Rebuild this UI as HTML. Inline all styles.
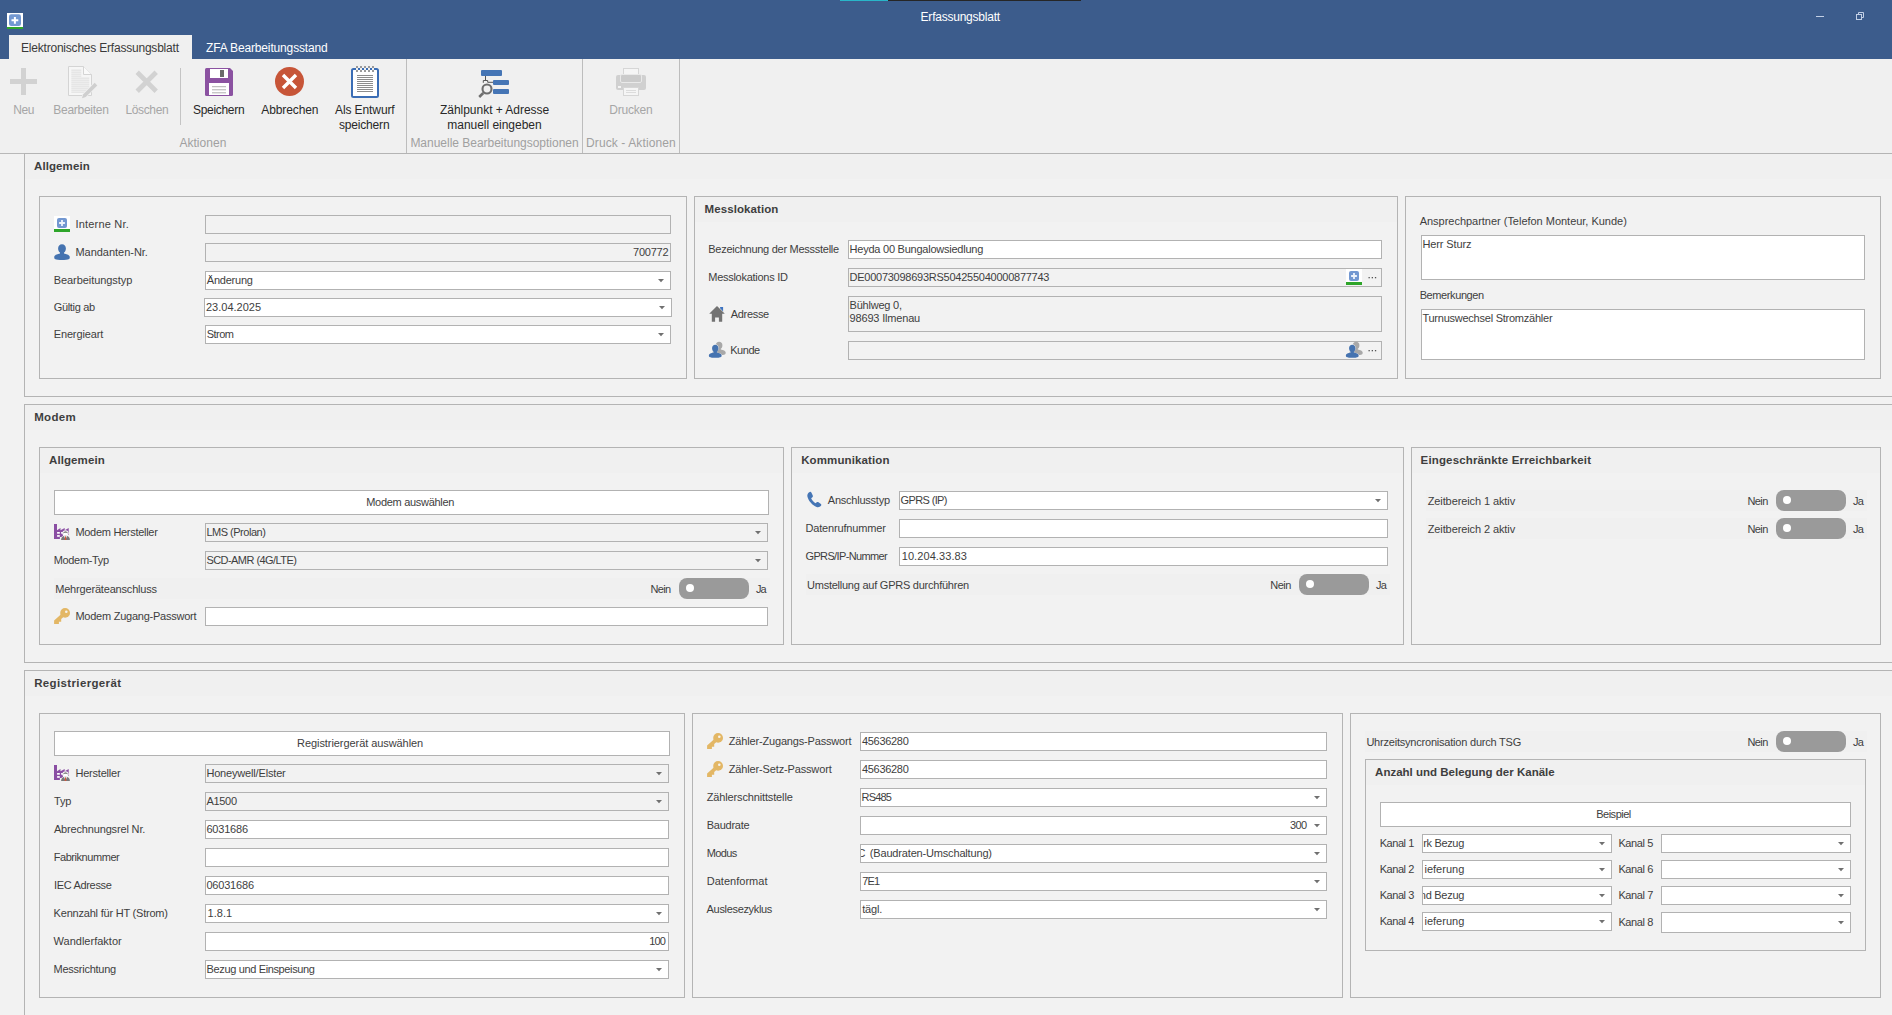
<!DOCTYPE html>
<html lang="de"><head><meta charset="utf-8"><title>Erfassungsblatt</title>
<style>
html,body{margin:0;padding:0}
body{width:1892px;height:1015px;overflow:hidden;position:relative;background:#f0f0f0;font-family:'Liberation Sans',sans-serif}
.b{position:absolute;box-sizing:border-box}
.t{position:absolute;white-space:pre}
svg{display:block;overflow:visible}
</style></head>
<body>
<div class="b" style="left:0px;top:0px;width:1892px;height:59px;background:#3c5c8c;"></div>
<div class="b" style="left:840px;top:0px;width:48px;height:1px;background:#29b6c9;"></div>
<div class="b" style="left:888px;top:0px;width:193px;height:1px;background:#262626;"></div>
<div class="b" style="left:9px;top:35px;width:183px;height:24px;background:#f0f0f0;"></div>
<div class="b" style="left:0px;top:59px;width:1892px;height:94px;background:#f0f0f0;"></div>
<div class="b" style="left:0px;top:153px;width:1892px;height:1px;background:#b8b8b8;"></div>
<div class="b" style="left:0px;top:154px;width:1892px;height:861px;background:#f2f2f2;"></div>
<div class="b" style="left:406px;top:59px;width:1px;height:94px;background:#bdbdbd;"></div>
<div class="b" style="left:582px;top:59px;width:1px;height:94px;background:#bdbdbd;"></div>
<div class="b" style="left:679px;top:59px;width:1px;height:94px;background:#bdbdbd;"></div>
<div class="b" style="left:180px;top:68px;width:1px;height:57px;background:#c4c4c4;"></div>
<div class="b" style="left:24px;top:153px;width:1873px;height:244px;border:1px solid #b4b4b4;background:#f2f2f2"></div>
<div class="b" style="left:25px;top:154px;width:1871px;height:25px;background:#f0f0f0"></div>
<div class="b" style="left:24px;top:404px;width:1873px;height:259px;border:1px solid #b4b4b4;background:#f2f2f2"></div>
<div class="b" style="left:25px;top:405px;width:1871px;height:25px;background:#f0f0f0"></div>
<div class="b" style="left:24px;top:670px;width:1873px;height:350px;border:1px solid #b4b4b4;background:#f2f2f2"></div>
<div class="b" style="left:25px;top:671px;width:1871px;height:25px;background:#f0f0f0"></div>
<div class="b" style="left:39px;top:196px;width:648px;height:183px;border:1px solid #b4b4b4;background:#f2f2f2"></div>
<div class="b" style="left:694px;top:196px;width:704px;height:183px;border:1px solid #b4b4b4;background:#f2f2f2"></div>
<div class="b" style="left:695px;top:197px;width:702px;height:25px;background:#f0f0f0"></div>
<div class="b" style="left:1405px;top:196px;width:476px;height:183px;border:1px solid #b4b4b4;background:#f2f2f2"></div>
<div class="b" style="left:39px;top:447px;width:745px;height:198px;border:1px solid #b4b4b4;background:#f2f2f2"></div>
<div class="b" style="left:40px;top:448px;width:743px;height:25px;background:#f0f0f0"></div>
<div class="b" style="left:791px;top:447px;width:613px;height:198px;border:1px solid #b4b4b4;background:#f2f2f2"></div>
<div class="b" style="left:792px;top:448px;width:611px;height:25px;background:#f0f0f0"></div>
<div class="b" style="left:1411px;top:447px;width:470px;height:198px;border:1px solid #b4b4b4;background:#f2f2f2"></div>
<div class="b" style="left:1412px;top:448px;width:468px;height:25px;background:#f0f0f0"></div>
<div class="b" style="left:39px;top:713px;width:646px;height:285px;border:1px solid #b4b4b4;background:#f2f2f2"></div>
<div class="b" style="left:692px;top:713px;width:651px;height:285px;border:1px solid #b4b4b4;background:#f2f2f2"></div>
<div class="b" style="left:1350px;top:713px;width:531px;height:285px;border:1px solid #b4b4b4;background:#f2f2f2"></div>
<div class="b" style="left:1365px;top:759px;width:501px;height:192px;border:1px solid #b4b4b4;background:#f2f2f2"></div>
<div class="b" style="left:1366px;top:760px;width:499px;height:25px;background:#f0f0f0"></div>
<div class="b" style="left:205px;top:215px;width:466px;height:19px;background:#f2f2f2;border:1px solid #b2b2b2;box-sizing:border-box;"></div>
<div class="b" style="left:205px;top:243px;width:466px;height:19px;background:#f2f2f2;border:1px solid #b2b2b2;box-sizing:border-box;"></div>
<div class="b" style="left:205px;top:271px;width:466px;height:19px;background:#ffffff;border:1px solid #b2b2b2;box-sizing:border-box;"></div>
<svg class="b" style="left:657px;top:279px" width="8" height="4" viewBox="0 0 8 4"><path d="M1 0.100H7L4 3.200Z" fill="#707070"/></svg>
<div class="b" style="left:204px;top:298px;width:468px;height:19px;background:#ffffff;border:1px solid #b2b2b2;box-sizing:border-box;"></div>
<svg class="b" style="left:658px;top:306px" width="8" height="4" viewBox="0 0 8 4"><path d="M1 0.100H7L4 3.200Z" fill="#707070"/></svg>
<div class="b" style="left:205px;top:325px;width:466px;height:19px;background:#ffffff;border:1px solid #b2b2b2;box-sizing:border-box;"></div>
<svg class="b" style="left:657px;top:333px" width="8" height="4" viewBox="0 0 8 4"><path d="M1 0.100H7L4 3.200Z" fill="#707070"/></svg>
<div class="b" style="left:848px;top:240px;width:534px;height:19px;background:#ffffff;border:1px solid #b2b2b2;box-sizing:border-box;"></div>
<div class="b" style="left:848px;top:268px;width:534px;height:19px;background:#f2f2f2;border:1px solid #b2b2b2;box-sizing:border-box;"></div>
<div class="b" style="left:848px;top:296px;width:534px;height:36px;background:#f2f2f2;border:1px solid #b2b2b2;box-sizing:border-box;"></div>
<div class="b" style="left:848px;top:341px;width:534px;height:19px;background:#f2f2f2;border:1px solid #b2b2b2;box-sizing:border-box;"></div>
<div class="b" style="left:1421px;top:235px;width:444px;height:45px;background:#ffffff;border:1px solid #b2b2b2;box-sizing:border-box;"></div>
<div class="b" style="left:1421px;top:309px;width:444px;height:51px;background:#ffffff;border:1px solid #b2b2b2;box-sizing:border-box;"></div>
<div class="b" style="left:54px;top:490px;width:715px;height:25px;background:#ffffff;border:1px solid #b2b2b2;box-sizing:border-box;"></div>
<div class="b" style="left:205px;top:523px;width:563px;height:19px;background:#f2f2f2;border:1px solid #b2b2b2;box-sizing:border-box;"></div>
<svg class="b" style="left:754px;top:531px" width="8" height="4" viewBox="0 0 8 4"><path d="M1 0.100H7L4 3.200Z" fill="#707070"/></svg>
<div class="b" style="left:205px;top:551px;width:563px;height:19px;background:#f2f2f2;border:1px solid #b2b2b2;box-sizing:border-box;"></div>
<svg class="b" style="left:754px;top:559px" width="8" height="4" viewBox="0 0 8 4"><path d="M1 0.100H7L4 3.200Z" fill="#707070"/></svg>
<div class="b" style="left:54px;top:578px;width:716px;height:21px;background:#f0f0f0;"></div>
<div class="b" style="left:679px;top:578px;width:70px;height:21px;border-radius:8px;background:#9a9a9a"></div>
<div class="b" style="left:686px;top:584px;width:8px;height:8px;border-radius:4px;background:#fff"></div>
<div class="b" style="left:205px;top:607px;width:563px;height:19px;background:#ffffff;border:1px solid #b2b2b2;box-sizing:border-box;"></div>
<div class="b" style="left:899px;top:491px;width:489px;height:19px;background:#ffffff;border:1px solid #b2b2b2;box-sizing:border-box;"></div>
<svg class="b" style="left:1374px;top:499px" width="8" height="4" viewBox="0 0 8 4"><path d="M1 0.100H7L4 3.200Z" fill="#707070"/></svg>
<div class="b" style="left:899px;top:519px;width:489px;height:19px;background:#ffffff;border:1px solid #b2b2b2;box-sizing:border-box;"></div>
<div class="b" style="left:899px;top:547px;width:489px;height:19px;background:#ffffff;border:1px solid #b2b2b2;box-sizing:border-box;"></div>
<div class="b" style="left:806px;top:574px;width:584px;height:21px;background:#f0f0f0;"></div>
<div class="b" style="left:1299px;top:574px;width:70px;height:21px;border-radius:8px;background:#9a9a9a"></div>
<div class="b" style="left:1306px;top:580px;width:8px;height:8px;border-radius:4px;background:#fff"></div>
<div class="b" style="left:1426px;top:490px;width:441px;height:21px;background:#f0f0f0;"></div>
<div class="b" style="left:1776px;top:490px;width:70px;height:21px;border-radius:8px;background:#9a9a9a"></div>
<div class="b" style="left:1783px;top:496px;width:8px;height:8px;border-radius:4px;background:#fff"></div>
<div class="b" style="left:1426px;top:518px;width:441px;height:21px;background:#f0f0f0;"></div>
<div class="b" style="left:1776px;top:518px;width:70px;height:21px;border-radius:8px;background:#9a9a9a"></div>
<div class="b" style="left:1783px;top:524px;width:8px;height:8px;border-radius:4px;background:#fff"></div>
<div class="b" style="left:54px;top:731px;width:616px;height:25px;background:#ffffff;border:1px solid #b2b2b2;box-sizing:border-box;"></div>
<div class="b" style="left:205px;top:764px;width:464px;height:19px;background:#f2f2f2;border:1px solid #b2b2b2;box-sizing:border-box;"></div>
<svg class="b" style="left:655px;top:772px" width="8" height="4" viewBox="0 0 8 4"><path d="M1 0.100H7L4 3.200Z" fill="#707070"/></svg>
<div class="b" style="left:205px;top:792px;width:464px;height:19px;background:#f2f2f2;border:1px solid #b2b2b2;box-sizing:border-box;"></div>
<svg class="b" style="left:655px;top:800px" width="8" height="4" viewBox="0 0 8 4"><path d="M1 0.100H7L4 3.200Z" fill="#707070"/></svg>
<div class="b" style="left:205px;top:820px;width:464px;height:19px;background:#ffffff;border:1px solid #b2b2b2;box-sizing:border-box;"></div>
<div class="b" style="left:205px;top:848px;width:464px;height:19px;background:#ffffff;border:1px solid #b2b2b2;box-sizing:border-box;"></div>
<div class="b" style="left:205px;top:876px;width:464px;height:19px;background:#ffffff;border:1px solid #b2b2b2;box-sizing:border-box;"></div>
<div class="b" style="left:205px;top:904px;width:464px;height:19px;background:#ffffff;border:1px solid #b2b2b2;box-sizing:border-box;"></div>
<svg class="b" style="left:655px;top:912px" width="8" height="4" viewBox="0 0 8 4"><path d="M1 0.100H7L4 3.200Z" fill="#707070"/></svg>
<div class="b" style="left:205px;top:932px;width:464px;height:19px;background:#ffffff;border:1px solid #b2b2b2;box-sizing:border-box;"></div>
<div class="b" style="left:205px;top:960px;width:464px;height:19px;background:#ffffff;border:1px solid #b2b2b2;box-sizing:border-box;"></div>
<svg class="b" style="left:655px;top:968px" width="8" height="4" viewBox="0 0 8 4"><path d="M1 0.100H7L4 3.200Z" fill="#707070"/></svg>
<div class="b" style="left:860px;top:732px;width:467px;height:19px;background:#ffffff;border:1px solid #b2b2b2;box-sizing:border-box;"></div>
<div class="b" style="left:860px;top:760px;width:467px;height:19px;background:#ffffff;border:1px solid #b2b2b2;box-sizing:border-box;"></div>
<div class="b" style="left:860px;top:788px;width:467px;height:19px;background:#ffffff;border:1px solid #b2b2b2;box-sizing:border-box;"></div>
<svg class="b" style="left:1313px;top:796px" width="8" height="4" viewBox="0 0 8 4"><path d="M1 0.100H7L4 3.200Z" fill="#707070"/></svg>
<div class="b" style="left:860px;top:816px;width:467px;height:19px;background:#ffffff;border:1px solid #b2b2b2;box-sizing:border-box;"></div>
<svg class="b" style="left:1313px;top:824px" width="8" height="4" viewBox="0 0 8 4"><path d="M1 0.100H7L4 3.200Z" fill="#707070"/></svg>
<div class="b" style="left:860px;top:844px;width:467px;height:19px;background:#ffffff;border:1px solid #b2b2b2;box-sizing:border-box;"></div>
<svg class="b" style="left:1313px;top:852px" width="8" height="4" viewBox="0 0 8 4"><path d="M1 0.100H7L4 3.200Z" fill="#707070"/></svg>
<div class="b" style="left:860px;top:872px;width:467px;height:19px;background:#ffffff;border:1px solid #b2b2b2;box-sizing:border-box;"></div>
<svg class="b" style="left:1313px;top:880px" width="8" height="4" viewBox="0 0 8 4"><path d="M1 0.100H7L4 3.200Z" fill="#707070"/></svg>
<div class="b" style="left:860px;top:900px;width:467px;height:19px;background:#ffffff;border:1px solid #b2b2b2;box-sizing:border-box;"></div>
<svg class="b" style="left:1313px;top:908px" width="8" height="4" viewBox="0 0 8 4"><path d="M1 0.100H7L4 3.200Z" fill="#707070"/></svg>
<div class="b" style="left:1365px;top:731px;width:502px;height:21px;background:#f0f0f0;"></div>
<div class="b" style="left:1776px;top:731px;width:70px;height:21px;border-radius:8px;background:#9a9a9a"></div>
<div class="b" style="left:1783px;top:737px;width:8px;height:8px;border-radius:4px;background:#fff"></div>
<div class="b" style="left:1380px;top:802px;width:471px;height:25px;background:#ffffff;border:1px solid #b2b2b2;box-sizing:border-box;"></div>
<div class="b" style="left:1422px;top:834px;width:190px;height:19px;background:#ffffff;border:1px solid #b2b2b2;box-sizing:border-box;"></div>
<svg class="b" style="left:1598px;top:842px" width="8" height="4" viewBox="0 0 8 4"><path d="M1 0.100H7L4 3.200Z" fill="#707070"/></svg>
<div class="b" style="left:1661px;top:834px;width:190px;height:19px;background:#ffffff;border:1px solid #b2b2b2;box-sizing:border-box;"></div>
<svg class="b" style="left:1837px;top:842px" width="8" height="4" viewBox="0 0 8 4"><path d="M1 0.100H7L4 3.200Z" fill="#707070"/></svg>
<div class="b" style="left:1422px;top:860px;width:190px;height:19px;background:#ffffff;border:1px solid #b2b2b2;box-sizing:border-box;"></div>
<svg class="b" style="left:1598px;top:868px" width="8" height="4" viewBox="0 0 8 4"><path d="M1 0.100H7L4 3.200Z" fill="#707070"/></svg>
<div class="b" style="left:1661px;top:860px;width:190px;height:19px;background:#ffffff;border:1px solid #b2b2b2;box-sizing:border-box;"></div>
<svg class="b" style="left:1837px;top:868px" width="8" height="4" viewBox="0 0 8 4"><path d="M1 0.100H7L4 3.200Z" fill="#707070"/></svg>
<div class="b" style="left:1422px;top:886px;width:190px;height:19px;background:#ffffff;border:1px solid #b2b2b2;box-sizing:border-box;"></div>
<svg class="b" style="left:1598px;top:894px" width="8" height="4" viewBox="0 0 8 4"><path d="M1 0.100H7L4 3.200Z" fill="#707070"/></svg>
<div class="b" style="left:1661px;top:886px;width:190px;height:19px;background:#ffffff;border:1px solid #b2b2b2;box-sizing:border-box;"></div>
<svg class="b" style="left:1837px;top:894px" width="8" height="4" viewBox="0 0 8 4"><path d="M1 0.100H7L4 3.200Z" fill="#707070"/></svg>
<div class="b" style="left:1422px;top:912px;width:190px;height:19px;background:#ffffff;border:1px solid #b2b2b2;box-sizing:border-box;"></div>
<svg class="b" style="left:1598px;top:920px" width="8" height="4" viewBox="0 0 8 4"><path d="M1 0.100H7L4 3.200Z" fill="#707070"/></svg>
<div class="b" style="left:1661px;top:912px;width:190px;height:21px;background:#ffffff;border:1px solid #b2b2b2;box-sizing:border-box;"></div>
<svg class="b" style="left:1837px;top:921px" width="8" height="4" viewBox="0 0 8 4"><path d="M1 0.100H7L4 3.200Z" fill="#707070"/></svg>
<svg class="b" style="left:7px;top:13px" width="16" height="16" viewBox="0 0 16 16"><rect x="0" y="0" width="16" height="14" fill="#fff"/><rect x="0" y="14" width="16" height="2" fill="#2ea52a"/><rect x="2" y="1.300" width="12" height="11.600" rx="2.200" fill="#7398d1"/><path d="M6.900 3.900h2v2.400h2.400v2H8.900v2.400H6.900V8.300H4.500V6.300H6.900z" fill="#ffffff"/></svg>
<svg class="b" style="left:54px;top:216px" width="16" height="16" viewBox="0 0 16 16"><rect x="0" y="0" width="16" height="13" fill="#fff"/><rect x="0" y="13" width="16" height="3" fill="#2ea52a"/><rect x="3" y="2" width="10" height="10" rx="2" fill="#7398d1"/><path d="M7.100 4.100h1.800v2h2v1.800h-2v2H7.100v-2h-2V6.100h2z" fill="#eef3fb"/></svg>
<svg class="b" style="left:1346px;top:269px" width="16" height="16" viewBox="0 0 16 16"><rect x="0" y="0" width="16" height="13" fill="#fff"/><rect x="0" y="13" width="16" height="3" fill="#2ea52a"/><rect x="3" y="2" width="10" height="10" rx="2" fill="#7398d1"/><path d="M7.100 4.100h1.800v2h2v1.800h-2v2H7.100v-2h-2V6.100h2z" fill="#eef3fb"/></svg>
<svg class="b" style="left:54px;top:244px" width="16" height="16" viewBox="0 0 16 16"><path d="M8 0.3c2.3 0 3.9 1.7 3.9 4.1 0 1.9-.8 3.5-1.9 4.2v.9c3 .6 5.7 1.5 5.8 3.6 0 .9-.2 1.6-.6 1.9-1.5.7-4.4 1-7.2 1s-5.700-.3-7.200-1c-.4-.3-.6-1-.6-1.900.1-2.100 2.800-3 5.800-3.600v-.9C4.900 7.900 4.100 6.300 4.100 4.400 4.100 2 5.700.3 8 .3z" fill="#4573b0"/></svg>
<svg class="b" style="left:709px;top:342px" width="17" height="16" viewBox="0 0 17 16"><g transform="translate(3.3,-0.6) scale(0.85)"><path d="M8 0.3c2.3 0 3.9 1.7 3.9 4.1 0 1.9-.8 3.5-1.9 4.2v.9c3 .6 5.7 1.5 5.8 3.6 0 .9-.2 1.6-.6 1.9-1.5.7-4.4 1-7.2 1s-5.700-.3-7.200-1c-.4-.3-.6-1-.6-1.900.1-2.100 2.800-3 5.800-3.600v-.9C4.900 7.900 4.100 6.300 4.100 4.400 4.100 2 5.700.3 8 .3z" fill="#a8a8a8"/></g><g transform="translate(-1.0,1.9) scale(0.90)"><path d="M8 0.3c2.3 0 3.9 1.7 3.9 4.1 0 1.9-.8 3.5-1.9 4.2v.9c3 .6 5.7 1.5 5.8 3.6 0 .9-.2 1.6-.6 1.9-1.5.7-4.4 1-7.2 1s-5.700-.3-7.200-1c-.4-.3-.6-1-.6-1.900.1-2.100 2.800-3 5.800-3.600v-.9C4.900 7.900 4.100 6.300 4.100 4.400 4.100 2 5.700.3 8 .3z" fill="#f2f2f2"/></g><g transform="translate(-0.3,2.6) scale(0.82)"><path d="M8 0.3c2.3 0 3.9 1.7 3.9 4.1 0 1.9-.8 3.5-1.9 4.2v.9c3 .6 5.7 1.5 5.8 3.6 0 .9-.2 1.6-.6 1.9-1.5.7-4.4 1-7.2 1s-5.700-.3-7.200-1c-.4-.3-.6-1-.6-1.900.1-2.100 2.800-3 5.800-3.600v-.9C4.900 7.900 4.100 6.300 4.100 4.400 4.100 2 5.700.3 8 .3z" fill="#4573b0"/></g></svg>
<svg class="b" style="left:1346px;top:342px" width="17" height="16" viewBox="0 0 17 16"><g transform="translate(3.3,-0.6) scale(0.85)"><path d="M8 0.3c2.3 0 3.9 1.7 3.9 4.1 0 1.9-.8 3.5-1.9 4.2v.9c3 .6 5.7 1.5 5.8 3.6 0 .9-.2 1.6-.6 1.9-1.5.7-4.4 1-7.2 1s-5.700-.3-7.200-1c-.4-.3-.6-1-.6-1.900.1-2.100 2.800-3 5.800-3.600v-.9C4.900 7.900 4.100 6.300 4.100 4.400 4.100 2 5.700.3 8 .3z" fill="#a8a8a8"/></g><g transform="translate(-1.0,1.9) scale(0.90)"><path d="M8 0.3c2.3 0 3.9 1.7 3.9 4.1 0 1.9-.8 3.5-1.9 4.2v.9c3 .6 5.7 1.5 5.8 3.6 0 .9-.2 1.6-.6 1.9-1.5.7-4.4 1-7.2 1s-5.700-.3-7.200-1c-.4-.3-.6-1-.6-1.900.1-2.100 2.800-3 5.800-3.600v-.9C4.900 7.900 4.100 6.300 4.100 4.400 4.100 2 5.700.3 8 .3z" fill="#f2f2f2"/></g><g transform="translate(-0.3,2.6) scale(0.82)"><path d="M8 0.3c2.3 0 3.9 1.7 3.9 4.1 0 1.9-.8 3.5-1.9 4.2v.9c3 .6 5.7 1.5 5.8 3.6 0 .9-.2 1.6-.6 1.9-1.5.7-4.4 1-7.2 1s-5.700-.3-7.200-1c-.4-.3-.6-1-.6-1.900.1-2.100 2.800-3 5.800-3.600v-.9C4.900 7.900 4.100 6.300 4.100 4.400 4.100 2 5.700.3 8 .3z" fill="#4573b0"/></g></svg>
<svg class="b" style="left:709px;top:305px" width="16" height="17" viewBox="0 0 16 17"><rect x="11.100" y="2" width="3" height="5.500" fill="#3d73c0"/><path d="M8 .2L-.4 8.700H8z M8 .2L16.400 8.700H8z" fill="#f2f2f2"/><path d="M8 .9L.2 8.700h2.600V16.700h3.300V12.400h3.800V16.700h3.300V8.700h2.600z" fill="#737373"/></svg>
<svg class="b" style="left:1368px;top:277px" width="9" height="2" viewBox="0 0 9 2"><rect x="0.5" y="0" width="1.3" height="1.3" fill="#555"/><rect x="3.7" y="0" width="1.3" height="1.3" fill="#555"/><rect x="6.900" y="0" width="1.3" height="1.3" fill="#555"/></svg>
<svg class="b" style="left:1368px;top:350px" width="9" height="2" viewBox="0 0 9 2"><rect x="0.5" y="0" width="1.3" height="1.3" fill="#555"/><rect x="3.7" y="0" width="1.3" height="1.3" fill="#555"/><rect x="6.900" y="0" width="1.3" height="1.3" fill="#555"/></svg>
<svg class="b" style="left:54px;top:524px" width="17" height="17" viewBox="0 0 17 17"><rect x="0" y="0" width="3" height="15" fill="#8a4ea3"/><path d="M3 6.200L6.500 4V6.200L10.700 4V6.200L14.700 4V11H9V15H3z" fill="#8a4ea3"/><rect x="3.100" y="8" width="2.700" height="1.700" fill="#fff"/><rect x="7.100" y="8" width="1.800" height="1.700" fill="#fff"/><rect x="3.100" y="11.100" width="2.700" height="1.700" fill="#fff"/><rect x="5.900" y="13" width="3.300" height="2.100" fill="#f2f2f2"/><circle cx="11.500" cy="9.300" r="3.100" fill="#f4f4f4"/><path d="M6.400 16.300c0-3.200 2.200-5 5.100-5s5.100 1.800 5.100 5z" fill="#f4f4f4"/><circle cx="11.500" cy="9.400" r="2.300" fill="#fff"/><path d="M9.100 9.700a2.400 2.500 0 0 1 4.800 0c-.5-.8-1.100-1-2.400-1s-1.900.2-2.400 1z" fill="#727272"/><path d="M7.100 15.900c0-2.700 1.900-4.100 4.400-4.100s4.400 1.400 4.400 4.100z" fill="#787878"/><path d="M10.100 11.900h2.800l-1.400 4z" fill="#fff"/><path d="M11.100 12.200h.8l.4 3.700h-1.600z" fill="#d9553a"/></svg>
<svg class="b" style="left:54px;top:765px" width="17" height="17" viewBox="0 0 17 17"><rect x="0" y="0" width="3" height="15" fill="#8a4ea3"/><path d="M3 6.200L6.500 4V6.200L10.700 4V6.200L14.700 4V11H9V15H3z" fill="#8a4ea3"/><rect x="3.100" y="8" width="2.700" height="1.700" fill="#fff"/><rect x="7.100" y="8" width="1.800" height="1.700" fill="#fff"/><rect x="3.100" y="11.100" width="2.700" height="1.700" fill="#fff"/><rect x="5.900" y="13" width="3.300" height="2.100" fill="#f2f2f2"/><circle cx="11.500" cy="9.300" r="3.100" fill="#f4f4f4"/><path d="M6.400 16.300c0-3.200 2.200-5 5.100-5s5.100 1.800 5.100 5z" fill="#f4f4f4"/><circle cx="11.500" cy="9.400" r="2.300" fill="#fff"/><path d="M9.100 9.700a2.400 2.500 0 0 1 4.800 0c-.5-.8-1.100-1-2.400-1s-1.900.2-2.400 1z" fill="#727272"/><path d="M7.100 15.900c0-2.700 1.900-4.100 4.400-4.100s4.400 1.400 4.400 4.100z" fill="#787878"/><path d="M10.100 11.900h2.800l-1.400 4z" fill="#fff"/><path d="M11.100 12.200h.8l.4 3.700h-1.600z" fill="#d9553a"/></svg>
<svg class="b" style="left:54px;top:608px" width="16" height="16" viewBox="0 0 16 16"><circle cx="11.100" cy="4.900" r="4.900" fill="#e3b765"/><path d="M6.800 6.500L.1 12.500V15.900H4.900V13.700H7.200V11.100L9.200 9.300z" fill="#e3b765"/><circle cx="12.300" cy="3.800" r="1.300" fill="#f6f3ee"/></svg>
<svg class="b" style="left:707px;top:733px" width="16" height="16" viewBox="0 0 16 16"><circle cx="11.100" cy="4.900" r="4.900" fill="#e3b765"/><path d="M6.800 6.500L.1 12.500V15.900H4.900V13.700H7.200V11.100L9.200 9.300z" fill="#e3b765"/><circle cx="12.300" cy="3.800" r="1.300" fill="#f6f3ee"/></svg>
<svg class="b" style="left:707px;top:761px" width="16" height="16" viewBox="0 0 16 16"><circle cx="11.100" cy="4.900" r="4.900" fill="#e3b765"/><path d="M6.800 6.500L.1 12.500V15.900H4.900V13.700H7.200V11.100L9.200 9.300z" fill="#e3b765"/><circle cx="12.300" cy="3.800" r="1.300" fill="#f6f3ee"/></svg>
<svg class="b" style="left:805.7px;top:490.9px" width="15.3" height="17.2" viewBox="0 0 16 18"><path d="M3.900 1c.7-.3 1.300-.1 1.700.7l1.500 3c.3.700.2 1.300-.4 1.800l-1.300 1.100c.900 2.100 2.600 4 4.600 5.200l1.200-1c.6-.5 1.300-.5 1.900-.1l2.500 2c.600.500.6 1.200.1 1.800-1 1.300-2.900 1.900-4.600 1.200C6.700 14.900 2.700 10.300 1.500 5.900 1 4 1.900 1.900 3.900 1z" fill="#4575b5"/></svg>
<svg class="b" style="left:10px;top:68px" width="27" height="27" viewBox="0 0 27 27"><rect x="11" y="0" width="5" height="27" fill="#d2d2d2"/><rect x="0" y="11" width="27" height="5" fill="#d2d2d2"/></svg>
<svg class="b" style="left:135px;top:70px" width="24" height="24" viewBox="0 0 24 24"><path d="M2.200 2.200L21.200 21.200M21.200 2.200L2.200 21.200" stroke="#d2d2d2" stroke-width="4.800" fill="none"/></svg>
<svg class="b" style="left:68px;top:66px" width="30" height="33" viewBox="0 0 30 33"><path d="M.5 .5H15.500L23.500 8.500V29.500H.5z" fill="#f6f6f6" stroke="#d4d4d4" stroke-width="1"/><path d="M15.500 .5V8.500H23.500" fill="#fafafa" stroke="#d4d4d4" stroke-width="1"/><rect x="3.300" y="3.7" width="10" height="0.8" fill="#d6d6d6"/><rect x="3.300" y="5.7" width="10" height="0.8" fill="#d6d6d6"/><rect x="3.300" y="7.7" width="10" height="0.8" fill="#d6d6d6"/><rect x="3.300" y="9.7" width="10" height="0.8" fill="#d6d6d6"/><rect x="3.300" y="11.7" width="18" height="0.8" fill="#d6d6d6"/><rect x="3.300" y="13.7" width="18" height="0.8" fill="#d6d6d6"/><rect x="3.300" y="15.7" width="18" height="0.8" fill="#d6d6d6"/><rect x="3.300" y="17.7" width="18" height="0.8" fill="#d6d6d6"/><rect x="3.300" y="19.7" width="18" height="0.8" fill="#d6d6d6"/><rect x="3.300" y="21.7" width="18" height="0.8" fill="#d6d6d6"/><rect x="3.300" y="23.7" width="18" height="0.8" fill="#d6d6d6"/><rect x="3.300" y="25.7" width="18" height="0.8" fill="#d6d6d6"/><path d="M26.700 16.800L29.300 19.400 17.700 31 14 32.200 15.100 28.400z" fill="#cfcfcf" stroke="#f0f0f0" stroke-width="1.400" paint-order="stroke"/></svg>
<svg class="b" style="left:205px;top:68px" width="28" height="28" viewBox="0 0 28 28"><path d="M1.500 0H25L28 3V26.500Q28 28 26.500 28H1.500Q0 28 0 26.500V1.500Q0 0 1.500 0z" fill="#8b52a1"/><rect x="5" y="1" width="18" height="9" fill="#fff"/><rect x="15" y="2" width="4" height="7" fill="#6a6a6a"/><rect x="4" y="15" width="20" height="12" fill="#fff"/><rect x="7" y="18.200" width="14" height="1" fill="#b0b0b0"/><rect x="7" y="21.300" width="14" height="1" fill="#b0b0b0"/><rect x="7" y="24.300" width="14" height="1" fill="#b0b0b0"/></svg>
<svg class="b" style="left:275px;top:67px" width="29" height="29" viewBox="0 0 29 29"><circle cx="14.500" cy="14.500" r="14.500" fill="#c75538"/><path d="M8 8L21 21M21 8L8 21" stroke="#fff" stroke-width="3.400" fill="none"/></svg>
<svg class="b" style="left:351px;top:66px" width="28" height="32" viewBox="0 0 28 32"><rect x="1" y="3" width="26" height="28" rx="1.500" fill="#fff" stroke="#3a6db5" stroke-width="2"/><rect x="6" y="9" width="16" height="1" fill="#8c8c8c"/><rect x="6" y="11" width="16" height="1" fill="#8c8c8c"/><rect x="6" y="13" width="16" height="1" fill="#8c8c8c"/><rect x="6" y="15" width="16" height="1" fill="#8c8c8c"/><rect x="6" y="17" width="16" height="1" fill="#8c8c8c"/><rect x="6" y="19" width="16" height="1" fill="#8c8c8c"/><rect x="6" y="21" width="16" height="1" fill="#8c8c8c"/><rect x="6" y="23" width="16" height="1" fill="#8c8c8c"/><rect x="6" y="25" width="16" height="1" fill="#8c8c8c"/><rect x="5" y="0" width="2" height="6" fill="#9a9a9a"/><rect x="5" y="2" width="2" height="2" fill="#f0f0f0"/><rect x="9" y="0" width="2" height="6" fill="#9a9a9a"/><rect x="9" y="2" width="2" height="2" fill="#f0f0f0"/><rect x="13" y="0" width="2" height="6" fill="#9a9a9a"/><rect x="13" y="2" width="2" height="2" fill="#f0f0f0"/><rect x="17" y="0" width="2" height="6" fill="#9a9a9a"/><rect x="17" y="2" width="2" height="2" fill="#f0f0f0"/><rect x="21" y="0" width="2" height="6" fill="#9a9a9a"/><rect x="21" y="2" width="2" height="2" fill="#f0f0f0"/></svg>
<svg class="b" style="left:478px;top:69px" width="32" height="30" viewBox="0 0 32 30"><rect x="3" y="1" width="21" height="6" rx="1" fill="#4575b5"/><rect x="15" y="11" width="16" height="5" rx="1" fill="#4575b5"/><rect x="15" y="20" width="16" height="5" rx="1" fill="#4575b5"/><path d="M7.500 7V11.500M5.300 13.800V11.500H9.700V13.300H15" stroke="#555" stroke-width="1" fill="none"/><circle cx="9" cy="20" r="4.500" fill="#f0f0f0" stroke="#6e6e6e" stroke-width="2.100"/><path d="M5.300 24L1.200 28" stroke="#707070" stroke-width="2.600"/></svg>
<svg class="b" style="left:616px;top:68px" width="30" height="28" viewBox="0 0 30 28"><rect x="0" y="7" width="30" height="15" rx="2" fill="#d0d0d0"/><rect x="7.500" y=".5" width="15" height="7" fill="#f5f5f5" stroke="#d6d6d6" stroke-width="1"/><rect x="4.500" y="6.500" width="21" height="8" rx="1.500" fill="#cbcbcb" stroke="#e9e9e9" stroke-width="1"/><rect x="7.500" y="19.500" width="15" height="8" fill="#f5f5f5" stroke="#d6d6d6" stroke-width="1"/><rect x="10" y="22" width="10" height="1" fill="#dcdcdc"/><rect x="10" y="24" width="10" height="1" fill="#dcdcdc"/><rect x="2" y="18" width="3" height="2" fill="#f4f4f4"/></svg>
<svg class="b" style="left:1816px;top:16px" width="8" height="1" viewBox="0 0 8 1"><rect x="0" y="0" width="8" height="1" fill="#c3d0e6"/></svg>
<svg class="b" style="left:1856px;top:12px" width="8" height="8" viewBox="0 0 8 8"><path d="M2.500 2.500V.5H7.500V5.500H5.500" fill="none" stroke="#c3d0e6" stroke-width="1"/><rect x=".5" y="2.500" width="5" height="5" fill="none" stroke="#c3d0e6" stroke-width="1"/></svg>
<span class="t" style="left:920.6px;top:9px;font-size:12px;line-height:16px;color:#ffffff;letter-spacing:-0.23px;">Erfassungsblatt</span>
<span class="t" style="left:21.0px;top:40px;font-size:12px;line-height:16px;color:#3a3a3a;letter-spacing:-0.21px;">Elektronisches Erfassungsblatt</span>
<span class="t" style="left:206.0px;top:40px;font-size:12px;line-height:16px;color:#ffffff;letter-spacing:-0.15px;">ZFA Bearbeitungsstand</span>
<span class="t" style="left:13.3px;top:102px;font-size:12px;line-height:16px;color:#a6a6a6;letter-spacing:-0.46px;">Neu</span>
<span class="t" style="left:53.3px;top:102px;font-size:12px;line-height:16px;color:#a6a6a6;letter-spacing:-0.28px;">Bearbeiten</span>
<span class="t" style="left:125.4px;top:102px;font-size:12px;line-height:16px;color:#a6a6a6;letter-spacing:-0.35px;">Löschen</span>
<span class="t" style="left:193.0px;top:102px;font-size:12px;line-height:16px;color:#282828;letter-spacing:-0.31px;">Speichern</span>
<span class="t" style="left:261.3px;top:102px;font-size:12px;line-height:16px;color:#282828;letter-spacing:-0.11px;">Abbrechen</span>
<span class="t" style="left:335.0px;top:102px;font-size:12px;line-height:16px;color:#282828;letter-spacing:-0.10px;">Als Entwurf</span>
<span class="t" style="left:339.0px;top:117px;font-size:12px;line-height:16px;color:#282828;letter-spacing:-0.18px;">speichern</span>
<span class="t" style="left:179.4px;top:135px;font-size:12px;line-height:16px;color:#a0a0a0;letter-spacing:0.04px;">Aktionen</span>
<span class="t" style="left:440.0px;top:102px;font-size:12px;line-height:16px;color:#282828;letter-spacing:-0.03px;">Zählpunkt + Adresse</span>
<span class="t" style="left:447.3px;top:117px;font-size:12px;line-height:16px;color:#282828;letter-spacing:-0.03px;">manuell eingeben</span>
<span class="t" style="left:410.4px;top:135px;font-size:12px;line-height:16px;color:#a0a0a0;letter-spacing:-0.02px;">Manuelle Bearbeitungsoptionen</span>
<span class="t" style="left:609.3px;top:102px;font-size:12px;line-height:16px;color:#a6a6a6;letter-spacing:-0.23px;">Drucken</span>
<span class="t" style="left:586.0px;top:135px;font-size:12px;line-height:16px;color:#a0a0a0;letter-spacing:0.11px;">Druck - Aktionen</span>
<span class="t" style="left:34.0px;top:159px;font-size:11.5px;line-height:14px;color:#3e3e3e;font-weight:bold;letter-spacing:0.10px;">Allgemein</span>
<span class="t" style="left:75.4px;top:217px;font-size:11px;line-height:14px;color:#3e3e3e;letter-spacing:0.20px;">Interne Nr.</span>
<span class="t" style="left:75.4px;top:245px;font-size:11px;line-height:14px;color:#3e3e3e;letter-spacing:-0.02px;">Mandanten-Nr.</span>
<span class="t" style="left:53.7px;top:273px;font-size:11px;line-height:14px;color:#3e3e3e;letter-spacing:-0.06px;">Bearbeitungstyp</span>
<span class="t" style="left:53.7px;top:300px;font-size:11px;line-height:14px;color:#3e3e3e;letter-spacing:-0.33px;">Gültig ab</span>
<span class="t" style="left:53.7px;top:327px;font-size:11px;line-height:14px;color:#3e3e3e;letter-spacing:-0.13px;">Energieart</span>
<span class="t" style="left:633.1px;top:245px;font-size:11px;line-height:14px;color:#3e3e3e;letter-spacing:-0.24px;">700772</span>
<span class="t" style="left:206.8px;top:273px;font-size:11px;line-height:14px;color:#3e3e3e;letter-spacing:-0.22px;">Änderung</span>
<span class="t" style="left:205.9px;top:300px;font-size:11px;line-height:14px;color:#3e3e3e;letter-spacing:0.02px;">23.04.2025</span>
<span class="t" style="left:206.8px;top:327px;font-size:11px;line-height:14px;color:#3e3e3e;letter-spacing:-0.54px;">Strom</span>
<span class="t" style="left:704.6px;top:202px;font-size:11.5px;line-height:14px;color:#3e3e3e;font-weight:bold;letter-spacing:0.08px;">Messlokation</span>
<span class="t" style="left:708.3px;top:242px;font-size:11px;line-height:14px;color:#3e3e3e;letter-spacing:-0.27px;">Bezeichnung der Messstelle</span>
<span class="t" style="left:849.6px;top:242px;font-size:11px;line-height:14px;color:#3e3e3e;letter-spacing:-0.24px;">Heyda 00 Bungalowsiedlung</span>
<span class="t" style="left:708.3px;top:270px;font-size:11px;line-height:14px;color:#3e3e3e;letter-spacing:-0.28px;">Messlokations ID</span>
<span class="t" style="left:849.5px;top:270px;font-size:11px;line-height:14px;color:#3e3e3e;letter-spacing:-0.25px;">DE00073098693RS504255040000877743</span>
<span class="t" style="left:730.8px;top:307px;font-size:11px;line-height:14px;color:#3e3e3e;letter-spacing:-0.33px;">Adresse</span>
<span class="t" style="left:849.6px;top:298px;font-size:11px;line-height:14px;color:#3e3e3e;letter-spacing:-0.23px;">Bühlweg 0,</span>
<span class="t" style="left:849.6px;top:311px;font-size:11px;line-height:14px;color:#3e3e3e;letter-spacing:-0.18px;">98693 Ilmenau</span>
<span class="t" style="left:730.2px;top:343px;font-size:11px;line-height:14px;color:#3e3e3e;letter-spacing:-0.45px;">Kunde</span>
<span class="t" style="left:1419.7px;top:214px;font-size:11px;line-height:14px;color:#3e3e3e;letter-spacing:-0.02px;">Ansprechpartner (Telefon Monteur, Kunde)</span>
<span class="t" style="left:1422.4px;top:237px;font-size:11px;line-height:14px;color:#3e3e3e;letter-spacing:-0.11px;">Herr Sturz</span>
<span class="t" style="left:1419.7px;top:288px;font-size:11px;line-height:14px;color:#3e3e3e;letter-spacing:-0.40px;">Bemerkungen</span>
<span class="t" style="left:1422.4px;top:311px;font-size:11px;line-height:14px;color:#3e3e3e;letter-spacing:-0.24px;">Turnuswechsel Stromzähler</span>
<span class="t" style="left:34.2px;top:410px;font-size:11.5px;line-height:14px;color:#3e3e3e;font-weight:bold;letter-spacing:0.34px;">Modem</span>
<span class="t" style="left:49.0px;top:453px;font-size:11.5px;line-height:14px;color:#3e3e3e;font-weight:bold;letter-spacing:0.10px;">Allgemein</span>
<span class="t" style="left:366.2px;top:495px;font-size:11px;line-height:14px;color:#3e3e3e;letter-spacing:-0.29px;">Modem auswählen</span>
<span class="t" style="left:75.4px;top:525px;font-size:11px;line-height:14px;color:#3e3e3e;letter-spacing:-0.29px;">Modem Hersteller</span>
<span class="t" style="left:206.4px;top:525px;font-size:11px;line-height:14px;color:#3e3e3e;letter-spacing:-0.49px;">LMS (Prolan)</span>
<span class="t" style="left:53.7px;top:553px;font-size:11px;line-height:14px;color:#3e3e3e;letter-spacing:-0.33px;">Modem-Typ</span>
<span class="t" style="left:206.4px;top:553px;font-size:11px;line-height:14px;color:#3e3e3e;letter-spacing:-0.55px;">SCD-AMR (4G/LTE)</span>
<span class="t" style="left:55.2px;top:582px;font-size:11px;line-height:14px;color:#3e3e3e;letter-spacing:-0.18px;">Mehrgeräteanschluss</span>
<span class="t" style="left:650.5px;top:582px;font-size:11px;line-height:14px;color:#3e3e3e;letter-spacing:-0.67px;">Nein</span>
<span class="t" style="left:755.9px;top:582px;font-size:11px;line-height:14px;color:#3e3e3e;letter-spacing:-0.85px;">Ja</span>
<span class="t" style="left:75.4px;top:609px;font-size:11px;line-height:14px;color:#3e3e3e;letter-spacing:-0.24px;">Modem Zugang-Passwort</span>
<span class="t" style="left:801.2px;top:453px;font-size:11.5px;line-height:14px;color:#3e3e3e;font-weight:bold;letter-spacing:0.12px;">Kommunikation</span>
<span class="t" style="left:827.8px;top:493px;font-size:11px;line-height:14px;color:#3e3e3e;letter-spacing:-0.23px;">Anschlusstyp</span>
<span class="t" style="left:900.5px;top:493px;font-size:11px;line-height:14px;color:#3e3e3e;letter-spacing:-0.62px;">GPRS (IP)</span>
<span class="t" style="left:805.5px;top:521px;font-size:11px;line-height:14px;color:#3e3e3e;letter-spacing:-0.17px;">Datenrufnummer</span>
<span class="t" style="left:805.5px;top:549px;font-size:11px;line-height:14px;color:#3e3e3e;letter-spacing:-0.64px;">GPRS/IP-Nummer</span>
<span class="t" style="left:901.7px;top:549px;font-size:11px;line-height:14px;color:#3e3e3e;letter-spacing:0.09px;">10.204.33.83</span>
<span class="t" style="left:807.0px;top:578px;font-size:11px;line-height:14px;color:#3e3e3e;letter-spacing:-0.24px;">Umstellung auf GPRS durchführen</span>
<span class="t" style="left:1270.3px;top:578px;font-size:11px;line-height:14px;color:#3e3e3e;letter-spacing:-0.51px;">Nein</span>
<span class="t" style="left:1376.1px;top:578px;font-size:11px;line-height:14px;color:#3e3e3e;letter-spacing:-0.85px;">Ja</span>
<span class="t" style="left:1420.6px;top:453px;font-size:11.5px;line-height:14px;color:#3e3e3e;font-weight:bold;letter-spacing:0.15px;">Eingeschränkte Erreichbarkeit</span>
<span class="t" style="left:1427.7px;top:494px;font-size:11px;line-height:14px;color:#3e3e3e;letter-spacing:-0.10px;">Zeitbereich 1 aktiv</span>
<span class="t" style="left:1427.7px;top:522px;font-size:11px;line-height:14px;color:#3e3e3e;letter-spacing:-0.10px;">Zeitbereich 2 aktiv</span>
<span class="t" style="left:1747.5px;top:494px;font-size:11px;line-height:14px;color:#3e3e3e;letter-spacing:-0.61px;">Nein</span>
<span class="t" style="left:1853.0px;top:494px;font-size:11px;line-height:14px;color:#3e3e3e;letter-spacing:-0.85px;">Ja</span>
<span class="t" style="left:1747.5px;top:522px;font-size:11px;line-height:14px;color:#3e3e3e;letter-spacing:-0.61px;">Nein</span>
<span class="t" style="left:1853.0px;top:522px;font-size:11px;line-height:14px;color:#3e3e3e;letter-spacing:-0.85px;">Ja</span>
<span class="t" style="left:1747.5px;top:735px;font-size:11px;line-height:14px;color:#3e3e3e;letter-spacing:-0.61px;">Nein</span>
<span class="t" style="left:1853.0px;top:735px;font-size:11px;line-height:14px;color:#3e3e3e;letter-spacing:-0.85px;">Ja</span>
<span class="t" style="left:34.2px;top:676px;font-size:11.5px;line-height:14px;color:#3e3e3e;font-weight:bold;letter-spacing:0.36px;">Registriergerät</span>
<span class="t" style="left:297.1px;top:736px;font-size:11px;line-height:14px;color:#3e3e3e;letter-spacing:-0.07px;">Registriergerät auswählen</span>
<span class="t" style="left:75.4px;top:766px;font-size:11px;line-height:14px;color:#3e3e3e;letter-spacing:-0.20px;">Hersteller</span>
<span class="t" style="left:206.4px;top:766px;font-size:11px;line-height:14px;color:#3e3e3e;letter-spacing:-0.17px;">Honeywell/Elster</span>
<span class="t" style="left:53.9px;top:794px;font-size:11px;line-height:14px;color:#3e3e3e;letter-spacing:-0.07px;">Typ</span>
<span class="t" style="left:206.4px;top:794px;font-size:11px;line-height:14px;color:#3e3e3e;letter-spacing:-0.28px;">A1500</span>
<span class="t" style="left:53.9px;top:822px;font-size:11px;line-height:14px;color:#3e3e3e;letter-spacing:-0.16px;">Abrechnungsrel Nr.</span>
<span class="t" style="left:206.4px;top:822px;font-size:11px;line-height:14px;color:#3e3e3e;letter-spacing:-0.20px;">6031686</span>
<span class="t" style="left:53.7px;top:850px;font-size:11px;line-height:14px;color:#3e3e3e;letter-spacing:-0.44px;">Fabriknummer</span>
<span class="t" style="left:53.9px;top:878px;font-size:11px;line-height:14px;color:#3e3e3e;letter-spacing:-0.31px;">IEC Adresse</span>
<span class="t" style="left:206.4px;top:878px;font-size:11px;line-height:14px;color:#3e3e3e;letter-spacing:-0.19px;">06031686</span>
<span class="t" style="left:53.6px;top:906px;font-size:11px;line-height:14px;color:#3e3e3e;letter-spacing:-0.21px;">Kennzahl für HT (Strom)</span>
<span class="t" style="left:207.5px;top:906px;font-size:11px;line-height:14px;color:#3e3e3e;letter-spacing:0.06px;">1.8.1</span>
<span class="t" style="left:53.6px;top:934px;font-size:11px;line-height:14px;color:#3e3e3e;">Wandlerfaktor</span>
<span class="t" style="left:649.3px;top:934px;font-size:11px;line-height:14px;color:#3e3e3e;letter-spacing:-0.83px;">100</span>
<span class="t" style="left:53.6px;top:962px;font-size:11px;line-height:14px;color:#3e3e3e;letter-spacing:-0.26px;">Messrichtung</span>
<span class="t" style="left:206.6px;top:962px;font-size:11px;line-height:14px;color:#3e3e3e;letter-spacing:-0.36px;">Bezug und Einspeisung</span>
<span class="t" style="left:728.8px;top:734px;font-size:11px;line-height:14px;color:#3e3e3e;letter-spacing:-0.17px;">Zähler-Zugangs-Passwort</span>
<span class="t" style="left:862.0px;top:734px;font-size:11px;line-height:14px;color:#3e3e3e;letter-spacing:-0.31px;">45636280</span>
<span class="t" style="left:728.8px;top:762px;font-size:11px;line-height:14px;color:#3e3e3e;letter-spacing:-0.15px;">Zähler-Setz-Passwort</span>
<span class="t" style="left:862.0px;top:762px;font-size:11px;line-height:14px;color:#3e3e3e;letter-spacing:-0.31px;">45636280</span>
<span class="t" style="left:706.7px;top:790px;font-size:11px;line-height:14px;color:#3e3e3e;letter-spacing:-0.14px;">Zählerschnittstelle</span>
<span class="t" style="left:861.5px;top:790px;font-size:11px;line-height:14px;color:#3e3e3e;letter-spacing:-0.79px;">RS485</span>
<span class="t" style="left:706.7px;top:818px;font-size:11px;line-height:14px;color:#3e3e3e;letter-spacing:-0.24px;">Baudrate</span>
<span class="t" style="left:1290.0px;top:818px;font-size:11px;line-height:14px;color:#3e3e3e;letter-spacing:-0.58px;">300</span>
<span class="t" style="left:706.7px;top:846px;font-size:11px;line-height:14px;color:#3e3e3e;letter-spacing:-0.63px;">Modus</span>
<span class="t" style="left:706.7px;top:874px;font-size:11px;line-height:14px;color:#3e3e3e;letter-spacing:0.03px;">Datenformat</span>
<span class="t" style="left:862.2px;top:874px;font-size:11px;line-height:14px;color:#3e3e3e;letter-spacing:-0.85px;">7E1</span>
<span class="t" style="left:706.6px;top:902px;font-size:11px;line-height:14px;color:#3e3e3e;letter-spacing:-0.33px;">Auslesezyklus</span>
<span class="t" style="left:862.2px;top:902px;font-size:11px;line-height:14px;color:#3e3e3e;letter-spacing:-0.15px;">tägl.</span>
<span class="t" style="left:869.8px;top:846px;font-size:11px;line-height:14px;color:#3e3e3e;letter-spacing:-0.17px;">(Baudraten-Umschaltung)</span>
<div class="b" style="left:861px;top:845px;width:39px;height:17px;overflow:hidden"><span class="t" style="left:-3.4px;top:1px;font-size:11px;line-height:14px;color:#3e3e3e;">C</span></div>
<span class="t" style="left:1366.4px;top:735px;font-size:11px;line-height:14px;color:#3e3e3e;letter-spacing:-0.21px;">Uhrzeitsyncronisation durch TSG</span>
<span class="t" style="left:1375.1px;top:765px;font-size:11.5px;line-height:14px;color:#3e3e3e;font-weight:bold;">Anzahl und Belegung der Kanäle</span>
<span class="t" style="left:1596.2px;top:807px;font-size:11px;line-height:14px;color:#3e3e3e;letter-spacing:-0.49px;">Beispiel</span>
<span class="t" style="left:1379.7px;top:836px;font-size:11px;line-height:14px;color:#3e3e3e;letter-spacing:-0.45px;">Kanal 1</span>
<span class="t" style="left:1618.4px;top:836px;font-size:11px;line-height:14px;color:#3e3e3e;letter-spacing:-0.40px;">Kanal 5</span>
<span class="t" style="left:1379.7px;top:862px;font-size:11px;line-height:14px;color:#3e3e3e;letter-spacing:-0.45px;">Kanal 2</span>
<span class="t" style="left:1618.4px;top:862px;font-size:11px;line-height:14px;color:#3e3e3e;letter-spacing:-0.40px;">Kanal 6</span>
<span class="t" style="left:1379.7px;top:888px;font-size:11px;line-height:14px;color:#3e3e3e;letter-spacing:-0.45px;">Kanal 3</span>
<span class="t" style="left:1618.4px;top:888px;font-size:11px;line-height:14px;color:#3e3e3e;letter-spacing:-0.40px;">Kanal 7</span>
<span class="t" style="left:1379.7px;top:914px;font-size:11px;line-height:14px;color:#3e3e3e;letter-spacing:-0.45px;">Kanal 4</span>
<span class="t" style="left:1618.4px;top:915px;font-size:11px;line-height:14px;color:#3e3e3e;letter-spacing:-0.40px;">Kanal 8</span>
<span class="t" style="left:1423.3px;top:836px;font-size:11px;line-height:14px;color:#3e3e3e;letter-spacing:-0.35px;">rk Bezug</span>
<span class="t" style="left:1424.5px;top:862px;font-size:11px;line-height:14px;color:#3e3e3e;">ieferung</span>
<div class="b" style="left:1423px;top:887px;width:172px;height:17px;overflow:hidden"><span class="t" style="left:-3.2px;top:1px;font-size:11px;line-height:14px;color:#3e3e3e;letter-spacing:-0.28px;">nd Bezug</span></div>
<span class="t" style="left:1424.5px;top:914px;font-size:11px;line-height:14px;color:#3e3e3e;">ieferung</span>
</body></html>
